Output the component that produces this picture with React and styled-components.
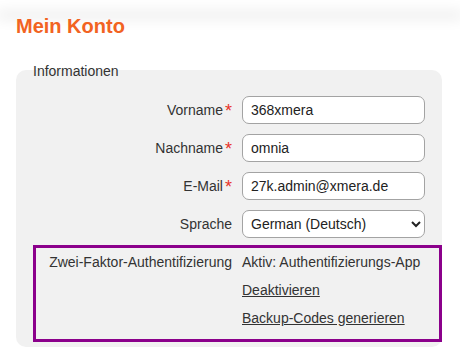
import React from "react";
import styled, { createGlobalStyle } from "styled-components";

const Global = createGlobalStyle`
  html, body { margin: 0; padding: 0; background: #fff; }
  body { font-family: "Liberation Sans", Arial, sans-serif; color: #333; font-size: 14px; }
`;

const TopShadow = styled.div`
  height: 0;
  box-shadow: 0 0 14px 3px rgba(0, 0, 0, 0.11);
`;

const Page = styled.main`
  padding: 0 16px;
`;

const Title = styled.h1`
  margin: 15px 0 0;
  font-size: 20px;
  line-height: 23px;
  font-weight: bold;
  color: #f26322;
`;

const Panel = styled.fieldset`
  box-sizing: border-box;
  width: 426px;
  margin: 23px 0 0;
  padding: 17px 17px 5px 17px;
  border: none;
  border-radius: 10px;
  background: #f1f1f1;
  min-inline-size: 0;
`;

const Legend = styled.legend`
  padding: 2px 0 0;
  font-size: 14px;
  line-height: 16px;
  color: #333;
`;

const Rows = styled.div`
  display: flex;
  flex-direction: column;
  gap: 10px;
`;

const Row = styled.div`
  display: grid;
  grid-template-columns: ${(p) => p.$labelWidth || 199}px 183px;
  column-gap: 10px;
  align-items: center;
`;

const Label = styled.label`
  text-align: right;
  font-size: 14px;
  line-height: 16px;
  color: #333;
  white-space: nowrap;
`;

const Required = styled.span`
  color: #e8342a;
  font-size: 18px;
  line-height: 0;
  margin-left: 2px;
  position: relative;
  top: 2px;
`;

const Field = styled.input`
  box-sizing: border-box;
  width: 183px;
  height: 28px;
  padding: 0 8px;
  border: 1px solid #a3a3a3;
  border-radius: 7px;
  background: #fff;
  font-family: "Liberation Sans", Arial, sans-serif;
  font-size: 14px;
  color: #222;
  outline: none;
`;

const Select = styled.select`
  box-sizing: border-box;
  width: 183px;
  height: 28px;
  padding: 0 4px;
  border: 1px solid #a3a3a3;
  border-radius: 7px;
  background: #fff;
  font-family: "Liberation Sans", Arial, sans-serif;
  font-size: 14px;
  color: #222;
`;

const TwoFactorBox = styled.div`
  margin: -3px -17px 0 0;
  border: 3px solid #8b008b;
  padding: 0 0 7px;
  display: grid;
  grid-template-columns: 196px auto;
  column-gap: 10px;
  align-items: start;
`;

const TwoFactorLabel = styled.div`
  text-align: right;
  line-height: 28px;
  white-space: nowrap;
`;

const Actions = styled.div`
  display: flex;
  flex-direction: column;
`;

const Status = styled.div`
  line-height: 28px;
  white-space: nowrap;
`;

const Action = styled.a`
  line-height: 28px;
  color: #333;
  text-decoration: underline;
  white-space: nowrap;
  cursor: pointer;
`;

export default function App() {
  return (
    <>
      <Global />
      <TopShadow />
      <Page>
        <Title>Mein Konto</Title>
        <Panel>
          <Legend>Informationen</Legend>
          <Rows>
            <Row>
              <Label>Vorname<Required>*</Required></Label>
              <Field defaultValue="368xmera" />
            </Row>
            <Row>
              <Label>Nachname<Required>*</Required></Label>
              <Field defaultValue="omnia" />
            </Row>
            <Row>
              <Label>E-Mail<Required>*</Required></Label>
              <Field defaultValue="27k.admin@xmera.de" />
            </Row>
            <Row>
              <Label>Sprache</Label>
              <Select defaultValue="de">
                <option value="de">German (Deutsch)</option>
                <option value="en">English</option>
              </Select>
            </Row>
            <TwoFactorBox>
              <TwoFactorLabel>Zwei-Faktor-Authentifizierung</TwoFactorLabel>
              <Actions>
                <Status>Aktiv: Authentifizierungs-App</Status>
                <Action>Deaktivieren</Action>
                <Action>Backup-Codes generieren</Action>
              </Actions>
            </TwoFactorBox>
          </Rows>
        </Panel>
      </Page>
    </>
  );
}
